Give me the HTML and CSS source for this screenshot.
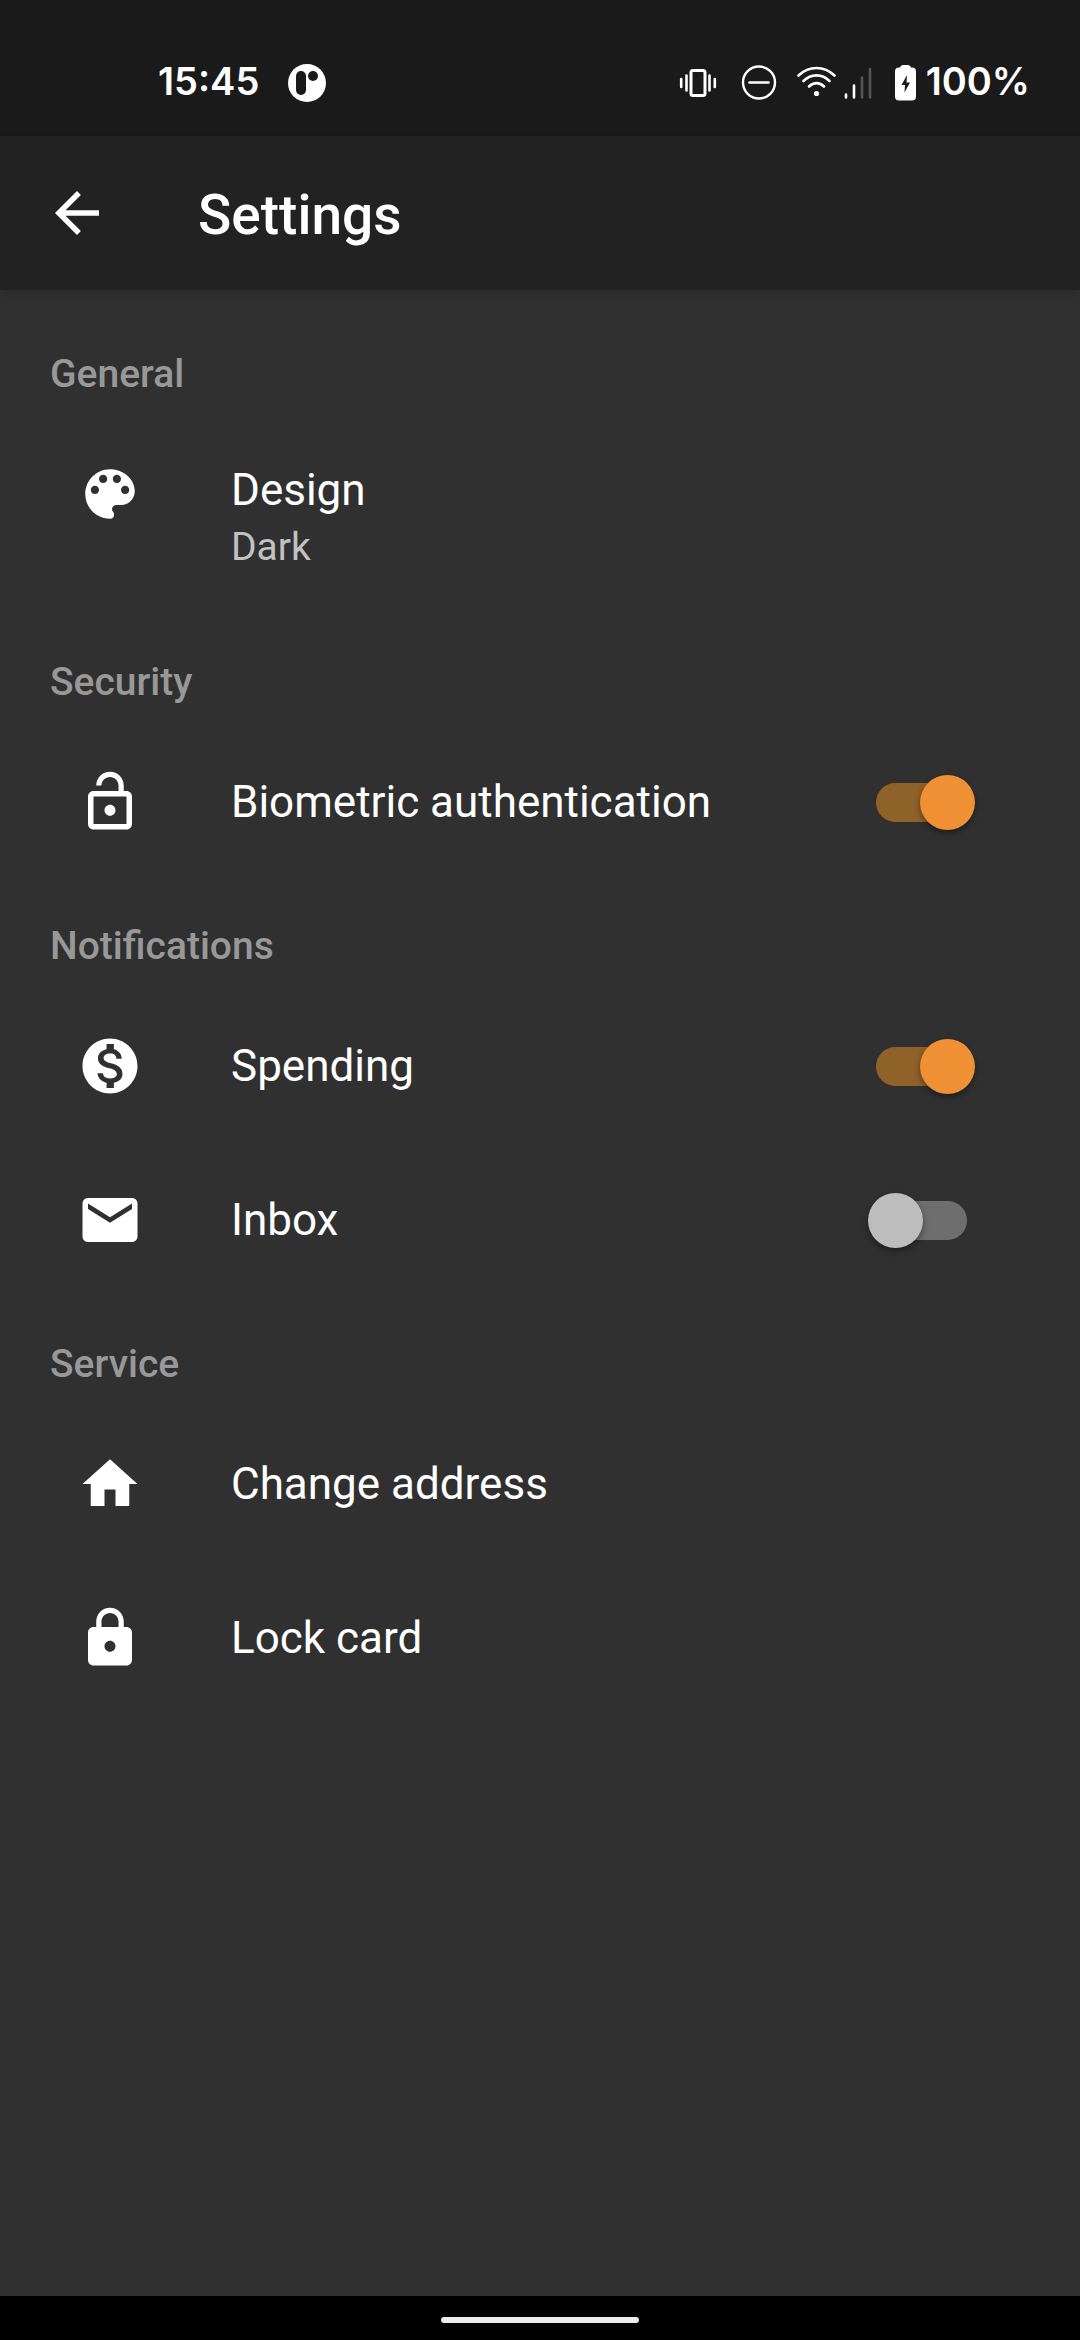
FILE: index.html
```html
<!DOCTYPE html>
<html lang="en">
<head>
  <meta charset="utf-8">
  <meta name="viewport" content="width=device-width, initial-scale=1">
  <title>Settings</title>
  <link rel="stylesheet" href="styles.css">
</head>
<body>
  <div class="status-bar">
    <div class="status-left">
      <span>15:45</span>
      <svg class="status-icon" width="40" height="40" viewBox="0 0 40 40" aria-hidden="true">
        <circle cx="20" cy="20" r="19" fill="#fff"/>
        <rect x="9" y="8" width="10" height="24" rx="5" fill="#1a1a1a"/>
        <circle cx="26" cy="13" r="5" fill="#1a1a1a"/>
      </svg>
    </div>
    <div class="status-right">
      <svg class="status-icon" width="42" height="40" viewBox="0 0 42 40" fill="none" stroke="#fff" aria-hidden="true">
        <rect x="13" y="7.500" width="14" height="25" rx="2" stroke-width="3"/>
        <path d="M8.500 12.500v15M31.500 12.500v15" stroke-width="2.600" stroke-linecap="round"/>
        <path d="M3.200 16v8M36.800 16v8" stroke-width="2.600" stroke-linecap="round"/>
      </svg>
      <svg class="status-icon" width="40" height="40" viewBox="0 0 40 40" fill="none" stroke="#fff" aria-hidden="true">
        <circle cx="21" cy="19.500" r="16" stroke-width="2.400"/>
        <path d="M11.500 19.500h19" stroke-width="2.600" stroke-linecap="round"/>
      </svg>
      <div class="signal-group">
        <svg class="status-icon" width="42" height="40" viewBox="0 0 42 40" fill="none" stroke="#fff" stroke-width="2.600" stroke-linecap="round" aria-hidden="true">
          <path d="M2.500 12.500C13 2.500 28 2.500 38.500 12.500M7.500 18C15 10.500 26 10.500 33.500 18M13 23.500c4.500-4.500 10.500-4.500 15 0"/>
          <circle cx="20.500" cy="30.500" r="2.600" fill="#fff" stroke="none"/>
        </svg>
        <svg class="status-icon" width="30" height="40" viewBox="0 0 30 40" fill="none" stroke-width="2.600" stroke-linecap="round" aria-hidden="true">
          <path d="M2 31.500v3M10 22.500v12" stroke="#fff"/>
          <path d="M18 14.500v20M26 6v28.500" stroke="#555"/>
        </svg>
      </div>
      <div class="battery">
        <svg class="status-icon" width="26" height="40" viewBox="0 0 26 40" aria-hidden="true">
          <path d="M8 4.500Q8.500 2 11 2h5q2.500 0 3 2.500h1q4 0 4 4v25q0 4-4 4H7q-4 0-4-4v-25q0-4 4-4z" fill="#fff"/>
          <path d="M15 12 9.500 22H13l-.500 7.500L18 19.500h-3.500z" fill="#1a1a1a"/>
        </svg>
        <span>100%</span>
      </div>
    </div>
  </div>

  <header class="app-bar">
    <button class="back" type="button" aria-label="Back">
      <svg class="icon" viewBox="0 0 24 24"><path d="M20 11H7.830l5.590-5.590L12 4l-8 8 8 8 1.410-1.410L7.830 13H20v-2z"/></svg>
    </button>
    <h1 class="title">Settings</h1>
  </header>

  <main class="settings">
    <section>
      <h2 class="section-title">General</h2>
      <button class="row row-two-line" type="button">
        <svg class="icon" viewBox="0 0 24 24" aria-hidden="true"><path d="M12 3c-4.970 0-9 4.030-9 9s4.030 9 9 9c.830 0 1.500-.670 1.500-1.500 0-.390-.150-.740-.390-1.010-.230-.260-.380-.610-.380-.990 0-.830.670-1.500 1.500-1.500H16c2.760 0 5-2.240 5-5 0-4.420-4.030-8-9-8zm-5.500 9c-.830 0-1.500-.670-1.500-1.500S5.670 9 6.500 9 8 9.670 8 10.500 7.330 12 6.500 12zm3-4C8.670 8 8 7.330 8 6.500S8.670 5 9.500 5s1.500.670 1.500 1.500S10.330 8 9.500 8zm5 0c-.830 0-1.500-.670-1.500-1.500S13.670 5 14.500 5s1.500.670 1.500 1.500S15.330 8 14.500 8zm3 4c-.830 0-1.500-.670-1.500-1.500S16.670 9 17.500 9s1.500.670 1.500 1.500-.670 1.500-1.500 1.500z"/></svg>
        <span class="label">
          <span class="label-main">Design</span>
          <span class="label-sub">Dark</span>
        </span>
      </button>
    </section>

    <section>
      <h2 class="section-title">Security</h2>
      <label class="row" for="biometric">
        <svg class="icon" viewBox="0 0 24 24" aria-hidden="true"><path d="M12 17c1.100 0 2-.900 2-2s-.900-2-2-2-2 .900-2 2 .900 2 2 2zm6-9h-1V6c0-2.760-2.240-5-5-5S7 3.240 7 6h1.900c0-1.710 1.390-3.100 3.100-3.100s3.100 1.390 3.100 3.100v2H6c-1.100 0-2 .900-2 2v10c0 1.100.900 2 2 2h12c1.100 0 2-.900 2-2V10c0-1.100-.900-2-2-2zm0 12H6V10h12v10z"/></svg>
        <span class="label">Biometric authentication</span>
        <input class="switch" type="checkbox" role="switch" id="biometric" checked>
      </label>
    </section>

    <section>
      <h2 class="section-title">Notifications</h2>
      <label class="row" for="spending">
        <svg class="icon" viewBox="0 0 24 24" aria-hidden="true"><path d="M12 2C6.480 2 2 6.480 2 12s4.480 10 10 10 10-4.480 10-10S17.520 2 12 2zm1.410 16.090V20h-2.670v-1.930c-1.710-.360-3.160-1.460-3.270-3.400h1.960c.100 1.050.820 1.870 2.650 1.870 1.960 0 2.400-.980 2.400-1.590 0-.830-.440-1.610-2.670-2.140-2.480-.600-4.180-1.620-4.180-3.670 0-1.720 1.390-2.840 3.110-3.210V4h2.670v1.950c1.860.450 2.790 1.860 2.850 3.390H14.300c-.050-1.110-.640-1.870-2.220-1.870-1.500 0-2.400.680-2.400 1.640 0 .840.650 1.390 2.670 1.910s4.180 1.390 4.180 3.910c-.010 1.830-1.380 2.830-3.120 3.160z"/></svg>
        <span class="label">Spending</span>
        <input class="switch" type="checkbox" role="switch" id="spending" checked>
      </label>
      <label class="row" for="inbox">
        <svg class="icon" viewBox="0 0 24 24" aria-hidden="true"><path d="M20 4H4c-1.100 0-1.990.900-1.990 2L2 18c0 1.100.900 2 2 2h16c1.100 0 2-.900 2-2V6c0-1.100-.900-2-2-2zm0 4-8 5-8-5V6l8 5 8-5v2z"/></svg>
        <span class="label">Inbox</span>
        <input class="switch" type="checkbox" role="switch" id="inbox">
      </label>
    </section>

    <section>
      <h2 class="section-title">Service</h2>
      <button class="row" type="button">
        <svg class="icon" viewBox="0 0 24 24" aria-hidden="true"><path d="M10 20v-6h4v6h5v-8h3L12 3 2 12h3v8z"/></svg>
        <span class="label">Change address</span>
      </button>
      <button class="row" type="button">
        <svg class="icon" viewBox="0 0 24 24" aria-hidden="true"><path d="M18 8h-1V6c0-2.760-2.240-5-5-5S7 3.240 7 6v2H6c-1.100 0-2 .900-2 2v10c0 1.100.900 2 2 2h12c1.100 0 2-.900 2-2V10c0-1.100-.900-2-2-2zm-6 9c-1.100 0-2-.900-2-2s.900-2 2-2 2 .900 2 2-.900 2-2 2zm3.100-9H8.900V6c0-1.710 1.390-3.100 3.100-3.100 1.710 0 3.100 1.390 3.100 3.100v2z"/></svg>
        <span class="label">Lock card</span>
      </button>
    </section>
  </main>

  <div class="nav-bar"><div class="nav-handle"></div></div>
</body>
</html>
```

FILE: styles.css
```css
*,
*::before,
*::after {
  box-sizing: border-box;
}

body {
  margin: 0;
  min-height: 100vh;
  display: flex;
  flex-direction: column;
  background: #303030;
  color: #fff;
  font-family: Roboto, sans-serif;
  font-size: 44px;
}

/* System status bar */
.status-bar {
  display: flex;
  justify-content: space-between;
  align-items: center;
  height: 136px;
  padding: 30px 50px 0 158px;
  background: #1a1a1a;
  font-family: Inter, sans-serif;
  font-size: 38px;
  font-weight: 600;
  line-height: 36px;
}

.status-icon {
  display: block;
  flex: none;
}

.status-left {
  display: flex;
  gap: 28px;
}

.status-right {
  display: flex;
  gap: 18px;
}

.signal-group {
  display: flex;
  gap: 6px;
}

.battery {
  display: flex;
  gap: 8px;
}

/* App bar */
.app-bar {
  display: flex;
  align-items: center;
  gap: 88px;
  height: 154px;
  padding: 0 44px;
  background: #222;
  box-shadow: 0 4px 8px rgba(0, 0, 0, 0.15);
}

.title {
  margin: 0;
  padding-top: 4px;
  font-size: 55px;
  font-weight: 500;
  line-height: 64px;
}

.icon {
  display: block;
  flex: none;
  width: 66px;
  height: 66px;
  fill: #fff;
}

.back,
button.row {
  border: 0;
  background: none;
  color: inherit;
  font: inherit;
  text-align: left;
  cursor: pointer;
}

.back {
  padding: 0;
}

/* Settings list */
.settings {
  flex: 1;
  padding-top: 17px;
}

.section-title {
  margin: 0;
  padding: 45px 50px 21px;
  color: #989898;
  font-size: 39px;
  font-weight: 500;
  line-height: 44px;
}

.row {
  display: flex;
  align-items: center;
  gap: 88px;
  width: 100%;
  min-height: 154px;
  padding: 44px 105px 44px 77px;
}

.label {
  flex: 1;
  line-height: 58px;
}

.row-two-line {
  align-items: flex-start;
  padding-bottom: 40px;
}

.label-main,
.label-sub {
  display: block;
}

.label-sub {
  color: #c1c1c1;
  font-size: 39px;
  line-height: 56px;
}

/* Switch: track and thumb share one grid cell */
.switch {
  appearance: none;
  flex: none;
  display: grid;
  align-items: center;
  width: 107px;
  height: 55px;
  margin: 0;
  cursor: pointer;
}

.switch::before,
.switch::after {
  content: "";
  grid-area: 1 / 1;
}

.switch::before {
  height: 39px;
  margin: 0 8px;
  border-radius: 20px;
  background: #6e6e6e;
}

.switch::after {
  width: 55px;
  height: 55px;
  border-radius: 50%;
  background: #bdbdbd;
  box-shadow: 0 3px 6px rgba(0, 0, 0, 0.4);
}

.switch:checked::before {
  background: #8f622a;
}

.switch:checked::after {
  justify-self: end;
  background: #ef9035;
}

/* System navigation bar */
.nav-bar {
  display: flex;
  justify-content: center;
  align-items: center;
  height: 44px;
  padding-top: 4px;
  background: #000;
}

.nav-handle {
  width: 198px;
  height: 6px;
  border-radius: 3px;
  background: #ececec;
}
```
